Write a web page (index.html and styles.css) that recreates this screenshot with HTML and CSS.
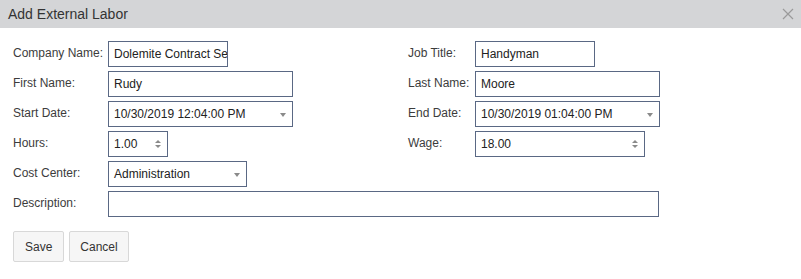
FILE: index.html
```html
<!DOCTYPE html>
<html lang="en">

<head>
  <meta charset="UTF-8">
  <title>Add External Labor</title>
  <link rel="stylesheet" href="styles.css">
</head>

<body>
  <div class="dialog">
    <div class="titlebar">
      <span class="title">Add External Labor</span>
      <svg class="close" width="12" height="12" viewBox="0 0 12 12">
        <path d="M1 1 L11 11 M11 1 L1 11" stroke="#9a9a9a" stroke-width="1.2" fill="none" />
      </svg>
    </div>

    <div class="form">
      <label class="lbl">Company Name:</label>
      <div class="cell"><div class="field w-company">Dolemite Contract Se</div></div>
      <label class="lbl">Job Title:</label>
      <div class="cell"><div class="field w-job">Handyman</div></div>

      <label class="lbl">First Name:</label>
      <div class="cell"><div class="field w-name">Rudy</div></div>
      <label class="lbl">Last Name:</label>
      <div class="cell"><div class="field w-name">Moore</div></div>

      <label class="lbl">Start Date:</label>
      <div class="cell">
        <div class="field w-name picker">10/30/2019 12:04:00 PM<span class="caret"></span></div>
      </div>
      <label class="lbl">End Date:</label>
      <div class="cell">
        <div class="field w-name picker">10/30/2019 01:04:00 PM<span class="caret"></span></div>
      </div>

      <label class="lbl">Hours:</label>
      <div class="cell">
        <div class="field w-hours picker">1.00<span class="spin"><i class="up"></i><i class="down"></i></span></div>
      </div>
      <label class="lbl">Wage:</label>
      <div class="cell">
        <div class="field w-wage picker">18.00<span class="spin"><i class="up"></i><i class="down"></i></span></div>
      </div>

      <label class="lbl">Cost Center:</label>
      <div class="cell">
        <div class="field w-cost picker">Administration<span class="caret"></span></div>
      </div>
      <div></div>
      <div></div>

      <label class="lbl">Description:</label>
      <div class="cell wide"><div class="field w-desc"></div></div>
    </div>

    <div class="buttons">
      <button class="btn">Save</button>
      <button class="btn">Cancel</button>
    </div>
  </div>
</body>

</html>
```

FILE: styles.css
```css
body {
  margin: 0;
  background: #ffffff;
  font-family: 'Liberation Sans', Arial, sans-serif;
  font-size: 12px;
  color: #333333;
}

.dialog {
  width: 801px;
  height: 279px;
}

.titlebar {
  height: 28px;
  background-color: #d4d5d7;
  display: flex;
  align-items: center;
  justify-content: space-between;
  padding: 0 7px 0 8px;
}

.title {
  font-size: 14px;
  color: #333333;
}

.close {
  display: block;
}

.form {
  display: grid;
  grid-template-columns: 95px 300px 67px 1fr;
  grid-auto-rows: 26px;
  row-gap: 4px;
  padding: 13px 0 0 13px;
}

.lbl {
  padding-top: 5px;
  line-height: 14px;
  color: #3c3c3c;
}

.cell.wide {
  grid-column: 2 / 5;
}

.field {
  box-sizing: border-box;
  height: 26px;
  border: 1px solid #5a6884;
  padding: 0 5px;
  line-height: 24px;
  color: #222222;
  white-space: nowrap;
  overflow: hidden;
  position: relative;
}

.w-company { width: 120px; }
.w-job { width: 120px; }
.w-name { width: 185px; }
.w-hours { width: 60px; }
.w-wage { width: 170px; }
.w-cost { width: 139px; }
.w-desc { width: 551px; }

.caret {
  position: absolute;
  right: 6px;
  top: 11px;
  border-left: 3.5px solid transparent;
  border-right: 3.5px solid transparent;
  border-top: 4px solid #8a8a8a;
}

.spin {
  position: absolute;
  right: 6px;
  top: 8px;
  display: flex;
  flex-direction: column;
  gap: 2px;
}

.spin i {
  display: block;
  border-left: 3.5px solid transparent;
  border-right: 3.5px solid transparent;
}

.spin .up {
  border-bottom: 3px solid #8a8a8a;
}

.spin .down {
  border-top: 3px solid #8a8a8a;
}

.buttons {
  display: flex;
  gap: 5px;
  padding: 14px 0 0 13px;
}

.btn {
  height: 31px;
  padding: 0 11px;
  font-family: 'Liberation Sans', Arial, sans-serif;
  font-size: 12px;
  color: #333333;
  background-color: #f6f6f6;
  border: 1px solid #d8d8d8;
  border-radius: 2px;
}

.btn + .btn {
  padding: 0 10px;
}
```
